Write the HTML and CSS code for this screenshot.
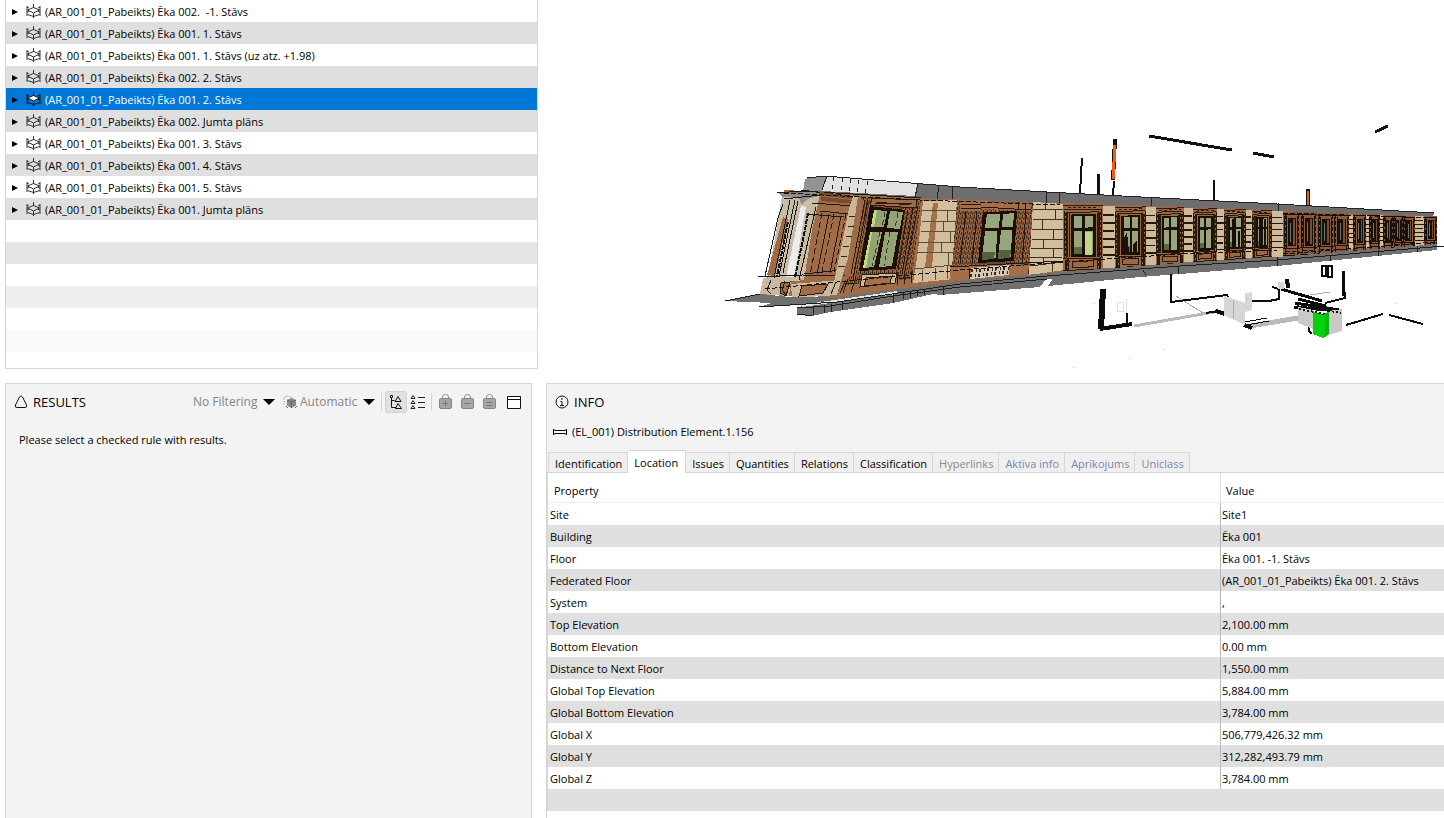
FILE: index.html
```
<!DOCTYPE html>
<html lang="en">
<head>
<meta charset="utf-8">
<title>Model checking</title>
<link rel="stylesheet" href="styles.css">
</head>
<body>
<svg class="defs" aria-hidden="true">
  <defs>
    <symbol id="i-floor" viewBox="0 0 15 14"><g fill="none" stroke="currentColor"><path d="M1 2v10M14 2v10M7.500 0v4M7.500 9v5M1 3l2 1M14 3l-2 1M1.500 10.500l6 2l6-2M1 8l2-.5M14 8l-2-.5"/><path class="slab" d="M1.500 6L7.500 3.500L13.500 6L7.500 9z"/></g></symbol>
    <symbol id="i-bag" viewBox="0 0 13 15"><path d="M3.500 4.500V3a3 2.500 0 0 1 6 0v1.500" fill="none" stroke="#8c8c8c"/><rect x=".5" y="4.500" width="12" height="10" rx="1.500" fill="#a6a6a6" stroke="#858585"/></symbol>
    <symbol id="bay" viewBox="0 0 100 100" overflow="visible">
      <path fill="#9c6743" d="M0 0h100v100H0z"/>
      <path fill="#2a1a10" d="M8 12h5v68H8zM88 14h4v66h-4zM4 84h6v14H4zM91 84h5v14h-5z"/>
      <g fill="none" stroke="#2a1a10" stroke-width="1">
        <path vector-effect="non-scaling-stroke" d="M0 3h100M3 9h94M10 13h80M3 10v72M15 14v66M85 14v66M97 10v72M0 82h100M0 99h100M14 82v17M86 82v17M24 86h52v9H24z"/>
        <path vector-effect="non-scaling-stroke" stroke-dasharray="3 2" d="M6 14v66M12 14v84M88 14v84M94 14v66M12 6h76"/>
      </g>
      <path fill="#1d0f09" d="M20 16h62v64H20z"/>
      <path fill="#98a47b" d="M28 19h19v17H28zM54 19h21v17H54zM28 41h19v34H28zM54 41h21v34H54z"/>
      <path fill="#5b6a43" d="M28 65h19v10H28z"/>
    </symbol>
    <symbol id="darkbay" viewBox="0 0 100 100" overflow="visible">
      <path fill="#8c5a38" d="M0 0h100v100H0z"/>
      <path fill="#17100c" d="M28 14h50v64H28z"/>
      <path fill="#6f766f" d="M40 24h8v44h-8z"/>
      <path fill="#7a4e32" d="M60 16h10v58H60z"/>
      <g fill="none" stroke="#1c120c"><path vector-effect="non-scaling-stroke" d="M0 5h100M6 9v72M20 9v72M88 9v72M0 82h100M0 98h100M12 82v16M84 82v16"/><path vector-effect="non-scaling-stroke" stroke-dasharray="4 2" d="M13 6v74M94 6v90M20 90h60"/></g>
    </symbol>
    <symbol id="pier" viewBox="0 0 100 100" overflow="visible">
      <path fill="#cfba9a" d="M0 0h100v100H0z"/>
      <path fill="#221a12" d="M0 13h90v3H0zM0 26h100v3H0zM0 39h90v3H0zM0 52h100v3H0zM0 65h90v3H0zM0 78h100v3H0z"/>
    </symbol>
    <pattern id="lattice" width="4" height="5" patternUnits="userSpaceOnUse" patternTransform="skewX(-10)"><path fill="#a06a45" d="M0 0h4v5H0z"/><path fill="#281a10" d="M0 0h1v4H0zM2 2h1v3H2z"/></pattern>
  </defs>
</svg>

<main class="app">
  <div class="upper">
    <ul class="tree">
      <li><button class="node"><i></i><svg><use href="#i-floor"/></svg><span>(AR_001_01_Pabeikts) Ēka 002. &nbsp;-1. Stāvs</span></button></li>
      <li><button class="node"><i></i><svg><use href="#i-floor"/></svg><span>(AR_001_01_Pabeikts) Ēka 001. 1. Stāvs</span></button></li>
      <li><button class="node"><i></i><svg><use href="#i-floor"/></svg><span>(AR_001_01_Pabeikts) Ēka 001. 1. Stāvs (uz atz. +1.98)</span></button></li>
      <li><button class="node"><i></i><svg><use href="#i-floor"/></svg><span>(AR_001_01_Pabeikts) Ēka 002. 2. Stāvs</span></button></li>
      <li><button class="node selected"><i></i><svg><use href="#i-floor"/></svg><span>(AR_001_01_Pabeikts) Ēka 001. 2. Stāvs</span></button></li>
      <li><button class="node"><i></i><svg><use href="#i-floor"/></svg><span>(AR_001_01_Pabeikts) Ēka 002. Jumta plāns</span></button></li>
      <li><button class="node"><i></i><svg><use href="#i-floor"/></svg><span>(AR_001_01_Pabeikts) Ēka 001. 3. Stāvs</span></button></li>
      <li><button class="node"><i></i><svg><use href="#i-floor"/></svg><span>(AR_001_01_Pabeikts) Ēka 001. 4. Stāvs</span></button></li>
      <li><button class="node"><i></i><svg><use href="#i-floor"/></svg><span>(AR_001_01_Pabeikts) Ēka 001. 5. Stāvs</span></button></li>
      <li><button class="node"><i></i><svg><use href="#i-floor"/></svg><span>(AR_001_01_Pabeikts) Ēka 001. Jumta plāns</span></button></li>
      <li></li><li class="fade-1"></li><li></li><li class="fade-2"></li><li></li><li class="fade-3"></li>
    </ul>
    <svg class="model" viewBox="538 0 906 369" role="img" aria-label="Building model">
      <!-- cornice -->
      <path fill="#6e6e6e" d="M803 191L807 178L825 176L917 184L960 187L1047 192L1160 198L1277 204L1434 213L1433 217L1277 211L1180 208L1060 203L940 199L920 198z"/>
      <path fill="#939393" d="M803 191L805 179L826 176L822 191z"/>
      <path fill="#e2e2e2" d="M822 191L827 176L917 184L915 196z"/>
      <path fill="none" stroke="#222" stroke-dasharray="4 4" d="M832 189l2-13M841 190l2-13M849 191l2-12M857 192l2-12M865 193l3-12"/>
      <path fill="none" stroke="#222" d="M822 190l5-14M807 178L825 176L960 187L1047 192L1160 198L1277 204L1434 213M915 197l3-13M937 199l2-13M952 200l1-13M1046 203v-11M1059 204v-11M1151 207v-9M1278 211v-8"/>
      <!-- wall -->
      <path fill="#9f6c48" d="M784 190L803 191L920 198L1060 203L1277 211L1436 216L1437 245L1277 257L1047 273L837 297L760 295L768 276z"/>
      <!-- corner pilasters -->
      <path fill="#a06c47" d="M806 195l52 3l-20 90l-54 2z"/>
      <path fill="#cabda8" d="M782 196l38-1l-20 86l-32-1z"/>
      <path fill="#9f6b47" d="M783 217l5 2l-13 57l-8-1z"/>
      <path fill="#8c8c8c" d="M779 193l41-1l-1 4l-12 3l-5 6l-3-7l-17-1z"/>
      <path fill="#ececf0" d="M801 206l5 1l-3 16l-9 54l-8 0z"/>
      <path fill="#c8bba6" d="M811 205l5 0l-12 75l-7-1z"/>
      <path fill="none" stroke="#141414" stroke-width="2" stroke-dasharray="5 1" d="M808 213l-4 22l-9 42M788 222l-11 54"/>
      <path fill="none" stroke="#191919" d="M777 193l24-2l120 7M784 199l36-4M783 204l-5 14l-13 58M790 200l-16 78M795 200l-16 76M798 201l-15 72M816 207l-17 73M758 277l44-2l46 1M801 190l23 3l34 4M812 203l42 3M806 214l38 3M804 274l38-4"/>
      <path fill="none" stroke="#24150d" d="M829 214l-12 60M841 216l-11 57M820 211l29 3"/>
      <path fill="none" stroke="#24150d" stroke-dasharray="6 3" d="M822 213l-12 62M834 214l-12 58M846 214l-12 58"/>
      <path fill="#7b4b2d" d="M820 192l36 5l-1 7l-34-3z"/>
      <path fill="none" stroke="#a06c47" d="M822 196l33 4"/>
      <path fill="#cbb796" d="M853 196h5l-3 20l-7 42l-9 29l-6 1l7-35l9-44z"/>
      <path fill="none" stroke="#2b2218" d="M849 216h7M848 226h6M846 236h6M843 246h6M841 256h6M838 266h7"/>
      <path fill="#c9b99f" d="M763 278l28 2l-2 16l-29-2zM791 284l50-4l-4 15l-45 3z"/>
      <path fill="#a06b46" stroke="#26180e" d="M802 286l26-2l-5 9l-24 3zM781 283l9-1l-4 14l-6-3z"/>
      <path fill="none" stroke="#222" d="M771 280l-4 10l4 4M785 281l-3 9l5 6M836 282l-5 12M846 280l-6 13"/>
      <!-- first window -->
      <path fill="url(#lattice)" d="M860 198l61 1l-9 80l-65 6z"/>
      <path fill="#9f6a46" stroke="#2a190f" d="M872 198l45 2l-1 8l-46-3z"/>
      <path fill="#9f6a46" d="M858 200l7 0l-12 76l-8 1z"/>
      <path fill="none" stroke="#2a190f" d="M876 202l34 3M875 204l38-1M868 200l-15 78M865 200l-14 74M918 206l-14 70M913 208l-11 66M908 210l-10 60"/>
      <path fill="#1e0e08" d="M870 206l35 4l-9 59l-37 2z"/>
      <path fill="#94a275" d="M874 210l13 1l-3 16l-13 0zM890 211l13 1l-3 17l-13-1zM870 232l12 0l-8 35l-11 1zM885 232l13 0l-6 34l-13 1z"/>
      <path fill="#bbdb7c" d="M874 210l3 0l-3 17l-3 0zM870 232l2 0l-6 36l-3 0z"/>
      <path fill="none" stroke="#2c3a22" stroke-dasharray="5 3" d="M885 212l-3 15M898 213l-3 15M880 232l-8 34M890 232l-6 34"/>
      <path fill="#1e0e08" d="M868 228l34 1v3l-35-1z"/>
      <path fill="#cbb796" stroke="#2a1a10" d="M862 275l35-2l-2 10l-35 4z"/>
      <path fill="#a46f4a" stroke="#2a1a10" d="M866 278l26-2l-2 7l-26 3z"/>
      <path fill="none" stroke="#2a1a10" d="M848 279l-5 14M856 278l-5 14M898 273l-1 12M905 272l-1 12M911 271v12M845 284l12-1M898 279l13-2"/>
      <!-- masonry -->
      <path fill="#d2bd9c" d="M923 201l36-1l-5 79l-41 4l5-32z"/>
      <path fill="#a3704a" d="M933 203h5l-6 64h-7z"/>
      <path fill="none" stroke="#5a4c3a" d="M921 210l37 1M921 221l36 1M920 231l37 1M918 242l38 0M917 253l38-1M914 269l40-4M947 210v11M943 221v11M950 232v10M941 242v11M948 253v12M922 270v11M935 268v12M947 266v13"/>
      <path fill="#d2bd9c" d="M1033 202l31 2v66l-35 5z"/>
      <path fill="none" stroke="#3a3024" d="M1033 209l31 1M1033 219l31 0M1032 229l31 0M1032 239h31M1031 248l32 0M1030 258l33-1M1030 266l33-4M1045 203v7M1055 210v9M1042 219v10M1053 229v10M1043 239v9M1053 248v9M1043 258v7M1052 264v8"/>
      <!-- second window -->
      <path fill="url(#lattice)" d="M957 200l76 3l-4 71l-78 8z"/>
      <path fill="#a36e49" d="M960 200h21v11h-21zM981 201l50 3v7l-50-2zM950 267l78-3l-1 11l-77 7z"/>
      <path fill="none" stroke="#24160d" d="M961 204h20M961 208h20M981 207l50 3M1018 202v8M1025 203v8M966 211l-6 52M977 211l-5 52M1026 211l-4 54M950 267l113-6M969 268v11"/>
      <path fill="#1e0e08" d="M983 212l34-1l-3 50l-36 2z"/>
      <path fill="#98a67d" d="M987 214l13 0l-1 14h-14zM1003 214l11-1l-1 14h-11zM985 231h12l-1 27l-14 2zM1001 230h11l-1 27l-13 1z"/>
      <path fill="#53613c" d="M982 252l13 0l-1 7l-12 1zM999 250l12 0l-1 8l-12 1z"/>
      <path fill="#d4c9b6" d="M971 268l38-3v10l-39 4z"/>
      <path fill="none" stroke="#302a22" stroke-width="3" stroke-dasharray="2 3 1 2" d="M971 271l38-3M970 276l39-4"/>
      <!-- receding bays -->
      <use href="#bay" width="100" height="100" transform="matrix(.4 -.01 0 .67 1063 204)"/>
      <path fill="#bcd889" d="M1085 232h7v23h-7z"/>
      <use href="#pier" width="100" height="100" transform="matrix(.12 0 0 .62 1103 206)"/>
      <use href="#bay" width="100" height="100" transform="matrix(.31 -.01 0 .62 1115 206)"/>
      <path fill="#1a120a" d="M1124 238l3-6l2 20h-5zM1133 244l4-4v12h-4z"/>
      <use href="#pier" width="100" height="100" transform="matrix(.1 0 0 .58 1146 207)"/>
      <use href="#bay" width="100" height="100" transform="matrix(.28 -.01 0 .58 1156 207)"/>
      <use href="#pier" width="100" height="100" transform="matrix(.09 0 0 .54 1184 208)"/>
      <use href="#bay" width="100" height="100" transform="matrix(.24 -.01 0 .54 1193 208)"/>
      <use href="#pier" width="100" height="100" transform="matrix(.07 0 0 .51 1217 209)"/>
      <use href="#bay" width="100" height="100" transform="matrix(.22 -.01 0 .51 1224 209)"/>
      <path fill="#14100c" d="M1232 219h2v28h-2zM1238 231h2v16h-2z"/>
      <use href="#pier" width="100" height="100" transform="matrix(.06 0 0 .48 1246 210)"/>
      <use href="#bay" width="100" height="100" transform="matrix(.2 -.01 0 .48 1252 210)"/>
      <path fill="#14100c" d="M1259 219h2v28h-2zM1264 219h2v28h-2z"/>
      <use href="#pier" width="100" height="100" transform="matrix(.11 0 0 .46 1272 211)"/>
      <use href="#darkbay" width="100" height="100" transform="matrix(.17 0 0 .44 1283 212)"/>
      <use href="#darkbay" width="100" height="100" transform="matrix(.17 0 0 .43 1300 212)"/>
      <use href="#darkbay" width="100" height="100" transform="matrix(.17 0 0 .41 1317 213)"/>
      <use href="#darkbay" width="100" height="100" transform="matrix(.15 0 0 .4 1334 213)"/>
      <use href="#pier" width="100" height="100" transform="matrix(.04 0 0 .34 1349 215)"/>
      <use href="#darkbay" width="100" height="100" transform="matrix(.13 0 0 .37 1353 214)"/>
      <use href="#pier" width="100" height="100" transform="matrix(.03 0 0 .33 1366 215)"/>
      <use href="#darkbay" width="100" height="100" transform="matrix(.11 0 0 .36 1369 214)"/>
      <use href="#pier" width="100" height="100" transform="matrix(.03 0 0 .32 1380 215)"/>
      <use href="#darkbay" width="100" height="100" transform="matrix(.1 0 0 .34 1383 215)"/>
      <use href="#darkbay" width="100" height="100" transform="matrix(.1 0 0 .33 1393 215)"/>
      <use href="#darkbay" width="100" height="100" transform="matrix(.12 0 0 .32 1403 216)"/>
      <use href="#pier" width="100" height="100" transform="matrix(.09 0 0 .31 1415 216)"/>
      <use href="#darkbay" width="100" height="100" transform="matrix(.13 0 0 .3 1424 216)"/>
      <!-- plinth -->
      <path fill="#707070" d="M725 301L760 294L790 297L837 297L960 281L1047 273L1180 263L1277 257L1437 244L1437 250L1277 266L1180 274L1140 277L1048 286L1052 280L1040 287L940 295L933 294L893 303L830 312L812 316L797 314V307L837 302L759 307L772 303z"/>
      <path fill="#e2e2e2" d="M800 305L897 291V294L830 303L803 307z"/>
      <path fill="#fff" d="M1040 287l6-8h6l-4 7z"/>
      <path fill="none" stroke="#1d1d1d" d="M725 301L760 294M759 307L837 302L960 284L1047 276L1180 266L1277 260L1444 246M797 308L830 306L893 296L960 287L1047 279M797 314l15 2M813 306v9M824 305v8M831 304v8M842 302v8M893 294v9M903 293v6M910 292v6M917 291v5M924 290v5M943 287v8M1143 270l3 5M1178 266v8M1277 257v9M1330 255v6M1378 250v6M1417 246v6"/>
      <path fill="none" stroke="#111" stroke-dasharray="5 2" d="M784 193L920 200L1060 205M765 289L960 270L1063 262L1180 254L1277 250M1283 213L1436 218M1283 254L1436 242"/>
      <!-- roof pipes -->
      <g fill="none" stroke="#111" stroke-width="2">
        <path d="M1082 158l-2 35M1114 181l-1 14M1214 180v20"/>
        <path stroke-width="3" d="M1149 136l83 14M1253 153l21 4M1375 132l13-6M1098 174v20"/>
        <path stroke-width="4" d="M1115 139l-2 41"/>
        <path stroke="#f75a10" stroke-width="3" d="M1115 145l-2 34"/>
        <path stroke-width="4" d="M1308 189v17"/>
        <path stroke="#e85a18" d="M1308 191v14"/>
      </g>
      <!-- basement services -->
      <g fill="none" stroke="#0c0c0c" stroke-width="2">
        <path stroke="#b9b9b9" stroke-width="3" d="M1134 326L1214 312"/>
        <path stroke="#b9b9b9" stroke-width="5" d="M1250 326L1298 318"/>
        <path stroke="#aaa" stroke-width="1" d="M1176 296l27 17M1310 295l20-3"/>
        <path stroke="#ddd" stroke-width="1" d="M1117 302h6v9h-6zM1126 299v12"/>
        <path d="M1171 274v28l56-7l4 8M1127 313v14M1252 301h17l10-2v-10l-7-2M1343 271l2 27l-20 5"/>
        <path stroke-width="6" d="M1103 289l-2 40"/>
        <path stroke-width="4" d="M1100 329l32-5M1216 311l9 3M1287 279l1 9M1244 325l8 3"/>
        <path stroke-width="3" d="M1343 271l1 25M1281 289l41 12M1295 303l44 7M1294 307l44 4M1298 299l28 7"/>
        <path d="M1346 325l37-11M1389 315l34 9M1309 312v19l3 3M1206 313l12-2"/>
        <path stroke-width="2" d="M1322 266h4v10h-4zM1328 266h4v11h-4z"/>
        <path stroke-width="1" d="M1245 322l22-4M1247 325l22-4"/>
      </g>
      <path fill="#d6d6d6" d="M1224 296l21 7v22l-21-10zM1245 293l7-1v18l-7 2zM1278 282h6v7h-6z"/>
      <path fill="none" stroke="#aaa" d="M1233 301v17"/>
      <path fill="#c9c9c9" d="M1298 307l15 3v19l-15-6zM1328 311l14-2v22l-14 4z"/>
      <path fill="#03d10b" d="M1313 311l8 3l8-2v22l-6 4l-10-4z"/>
      <path fill="#00b80a" d="M1325 313l4-1v22l-4 3z"/>
      <path fill="none" stroke="#111" stroke-dasharray="2 2" stroke-width="2" d="M1297 305l44 8M1299 309l26 5"/>
      <path fill="#bbb" d="M1073 367h1v1h-1zM1094 303h1v1h-1zM1163 349h1v1h-1zM1395 303h1v1h-1zM1129 358h1v1h-1z"/>
    </svg>
  </div>

  <div class="lower">
    <section class="panel results">
      <header class="head">
        <svg class="ic" viewBox="0 0 14 14"><path d="M5.500 2Q7-.5 8.500 2l4 8q1 2.500-1.500 2.500H3Q.5 12.500 1.500 10z" fill="none" stroke="#111"/></svg>
        <h2>RESULTS</h2>
        <div class="tools">
          <label class="pick"><select aria-label="Filtering"><option>No Filtering</option></select><i class="caret"></i></label>
          <label class="pick auto"><svg class="ic" viewBox="0 0 14 14"><path d="M1 9V2l4-1l5 2" fill="none" stroke="#999" stroke-dasharray="1 1"/><path d="M8.500 3l4.500 2v5.500L8.500 13L4 10.500V5z" fill="#888"/><path d="M4 5l4.500 2L13 5M8.500 7v6M3 11l2 2M14 11l-2 2" fill="none" stroke="#666"/></svg><select aria-label="Automatic view"><option>Automatic</option></select><i class="caret"></i></label>
          <span class="sep"></span>
          <button class="tb on" aria-label="Tree view"><svg viewBox="0 0 22 22"><g fill="none" stroke="#111"><path d="M5.500 4.500h2v2h-2zM6.500 7v9.500H11M6.500 9.500h3"/><path d="M13 5.500l3 5h-6zM13 12.500l3.500 5h-6z"/></g></svg></button>
          <button class="tb" aria-label="List view"><svg viewBox="0 0 22 22"><g fill="none" stroke="#222"><path d="M6 4.500l2 3H4zM6 9.500l2 3H4zM6 14.500l2 3H4zM11 6.500h7M11 11.500h7M11 16.500h7"/></g></svg></button>
          <span class="sep"></span>
          <button class="tb" disabled aria-label="Add"><svg viewBox="-4 -3 22 22"><use href="#i-bag" width="13" height="15"/><path d="M6.500 6.500v6M3.500 9.500h6" stroke="#777"/></svg></button>
          <button class="tb" disabled aria-label="Remove"><svg viewBox="-4 -3 22 22"><use href="#i-bag" width="13" height="15"/><path d="M3.500 9.500h6" stroke="#777"/></svg></button>
          <button class="tb" disabled aria-label="Set"><svg viewBox="-4 -3 22 22"><use href="#i-bag" width="13" height="15"/><path d="M3.500 8.500h6M3.500 11.500h6" stroke="#777"/></svg></button>
          <button class="tb win" aria-label="Maximize"><svg viewBox="0 0 22 22"><path d="M4.500 5.500h13v12h-13zM4 8.500h14" fill="#fff" stroke="#111"/></svg></button>
        </div>
      </header>
      <p class="hint">Please select a checked rule with results.</p>
    </section>

    <section class="panel info">
      <header class="head">
        <svg class="ic" viewBox="0 0 14 14"><circle cx="7" cy="7" r="6" fill="none" stroke="#111"/><path d="M7 3v2M5.500 6.500H7v4M5 10.500h4" fill="none" stroke="#111"/></svg>
        <h2>INFO</h2>
      </header>
      <p class="subject"><svg class="ic" viewBox="0 0 14 14"><path d="M.5 4v6M13.500 4v6M.5 4.500L2 5.500h10l1.500-1M.5 9.500L2 8.500h10l1.500 1" fill="none" stroke="#111"/></svg>(EL_001) Distribution Element.1.156</p>
      <nav class="tabs">
        <button>Identification</button><button class="active">Location</button><button>Issues</button><button>Quantities</button><button>Relations</button><button>Classification</button><button class="off">Hyperlinks</button><button class="custom">Aktīva info</button><button class="custom">Aprīkojums</button><button class="custom">Uniclass</button>
      </nav>
      <table>
        <thead><tr><th>Property</th><th>Value</th></tr></thead>
        <tbody>
          <tr><td>Site</td><td>Site1</td></tr>
          <tr><td>Building</td><td>Ēka 001</td></tr>
          <tr><td>Floor</td><td>Ēka 001. -1. Stāvs</td></tr>
          <tr><td>Federated Floor</td><td>(AR_001_01_Pabeikts) Ēka 001. 2. Stāvs</td></tr>
          <tr><td>System</td><td>,</td></tr>
          <tr><td>Top Elevation</td><td>2,100.00 mm</td></tr>
          <tr><td>Bottom Elevation</td><td>0.00 mm</td></tr>
          <tr><td>Distance to Next Floor</td><td>1,550.00 mm</td></tr>
          <tr><td>Global Top Elevation</td><td>5,884.00 mm</td></tr>
          <tr><td>Global Bottom Elevation</td><td>3,784.00 mm</td></tr>
          <tr><td>Global X</td><td>506,779,426.32 mm</td></tr>
          <tr><td>Global Y</td><td>312,282,493.79 mm</td></tr>
          <tr><td>Global Z</td><td>3,784.00 mm</td></tr>
          <tr class="blank"><td colspan="2"></td></tr>
        </tbody>
      </table>
    </section>
  </div>
</main>
</body>
</html>
```
FILE: styles.css
```
* { box-sizing: border-box; }
body {
  margin: 0;
  background: #fff;
  color: #000;
  font: 11px/22px "Open Sans", "Noto Sans", sans-serif;
  overflow: hidden;
}
button, select { font: inherit; color: inherit; border: 0; background: none; padding: 0; margin: 0; }
.defs { position: absolute; width: 0; height: 0; }
.app { display: flex; flex-direction: column; gap: 14px; min-height: 100vh; padding-left: 5px; }

.upper { display: grid; grid-template-columns: 533fr 906fr; }
.tree { margin: 0; padding: 0 0 16px; list-style: none; border: 1px solid #d6d6d6; border-top: 0; }
.tree li { height: 22px; }
.tree li:nth-child(even) { background: #dfdfdf; }
.tree .fade-1:nth-child(even) { background: #e4e4e4; }
.tree .fade-2:nth-child(even) { background: #efefef; }
.tree .fade-3:nth-child(even) { background: #f9f9f9; }
.node { --slab: none; display: flex; align-items: center; width: 100%; height: 22px; padding-left: 6px; text-align: left; }
.node i { border: 3px solid transparent; border-left: 6px solid #000; border-right: 0; margin: 2px 8px 0 0; }
.node svg { width: 15px; height: 14px; margin-right: 4px; color: #333; }
.node span { line-height: 22px; padding-top: 1px; }
.slab { fill: var(--slab); }
.node.selected { --slab: #fff; background: #0078d7; color: #fff; }
.node.selected svg { color: #111; }
.model { display: block; width: 100%; height: 100%; shape-rendering: crispEdges; }

.lower { flex: 1; display: grid; grid-template-columns: 527fr 898fr; column-gap: 14px; }
.panel { background: #f3f3f3; border: 1px solid #d6d6d6; border-bottom: 0; min-width: 0; }
.head { display: flex; align-items: center; height: 36px; padding-left: 8px; }
.head .ic, .subject .ic { width: 14px; height: 14px; flex: none; }
.head h2 { margin: 0 0 0 5px; font-size: 13px; line-height: 20px; font-weight: 400; }
.tools { display: flex; align-items: center; margin-left: auto; padding-right: 6px; color: #858585; font-size: 12px; }
.pick { display: flex; align-items: center; }
.pick.auto { margin-left: 8px; }
.pick select { appearance: none; }
.pick .ic { margin-right: 3px; }
.caret { border: 6px solid transparent; border-top-color: #000; border-bottom: 0; margin-left: 5px; }
.sep { width: 1px; height: 18px; background: #d4d4d4; margin: 0 3px 0 6px; }
.tb { width: 22px; height: 22px; }
.tb svg { display: block; width: 22px; height: 22px; }
.tb.on { background: #e0e0e0; border-radius: 3px; box-shadow: inset 0 0 0 1px #d2d2d2; }
.tb + .sep { margin: 0 3px 0 2px; }
.tb.win { margin-left: 2px; }
.hint { margin: 9px 13px; }

.subject { display: flex; align-items: center; gap: 5px; margin: 1px 0 7px 6px; }
.tabs { display: flex; align-items: flex-end; padding-left: 1px; border-bottom: 1px solid #d6d6d6; height: 23px; }
.tabs button { height: 20px; padding: 2px 5px 0 6px; background: #efefef; border: 1px solid #d6d6d6; border-width: 1px 1px 0 0; line-height: 18px; white-space: nowrap; }
.tabs button:first-child { border-left-width: 1px; }
.tabs .active { height: 23px; margin-bottom: -1px; background: #fff; padding: 1px 7px 0 6px; line-height: 20px; }
.tabs .off { color: #8b8b8b; }
.tabs .custom { color: #7a85ad; }

table { width: 100%; border-collapse: separate; border-spacing: 0; table-layout: fixed; background: #fff; border-left: 1px solid #d6d6d6; }
th { width: 25%; height: 30px; padding: 6px 6px 0; text-align: left; font-weight: 400; line-height: 22px; border-bottom: 1px solid #eee; }
th:first-child { width: 75%; }
th + th { border-left: 1px solid #e2e2e2; padding-left: 5px; }
td { height: 22px; padding: 2px 2px 0; line-height: 20px; white-space: nowrap; }
td + td { border-left: 1px solid #b8b8b8; padding-left: 1px; }
tbody tr:nth-child(even) { background: #dfdfdf; }
.info { border-right: 0; background: linear-gradient(#f3f3f3 200px, #fff 200px); }
```
